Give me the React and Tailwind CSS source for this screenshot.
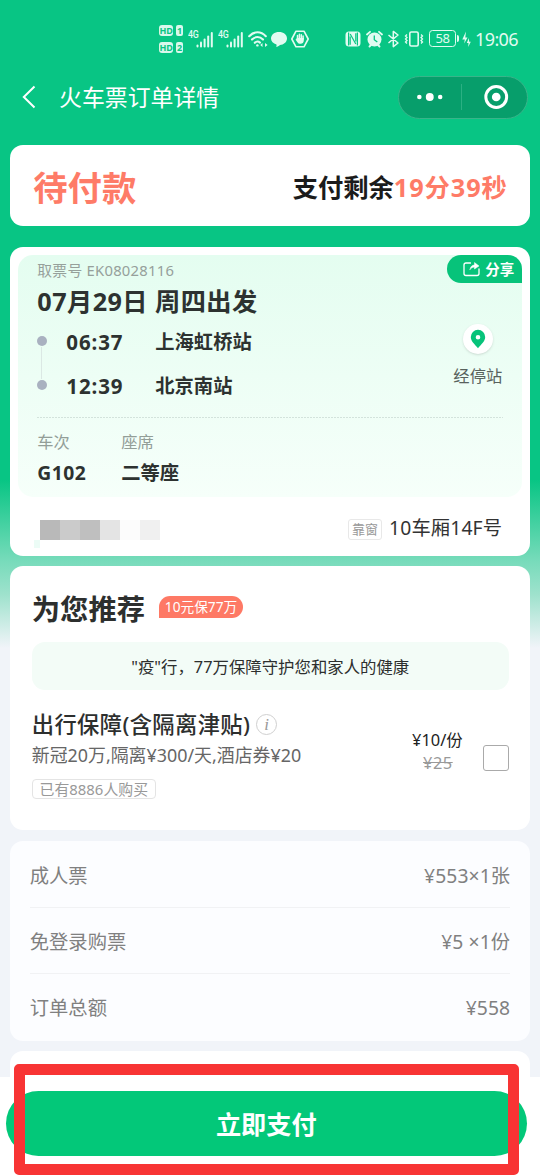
import React from "react";

function Sim({ n }) {
  return (
    <div className="flex gap-[3px]">
      <span className="flex h-[11px] w-[14px] items-center justify-center rounded-[3px] bg-[#d9f8ec] text-[9px] font-bold leading-none tracking-[-0.3px] text-[#08c584]">HD</span>
      <span className="flex h-[11px] w-[7px] items-center justify-center rounded-[2px] bg-[#d9f8ec] text-[9px] font-bold leading-none text-[#08c584]">{n}</span>
    </div>
  );
}

function Signal() {
  return (
    <div className="relative h-[18px] w-[26px]">
      <span className="absolute top-0 left-0 origin-top-left scale-x-[0.8] font-['Roboto',sans-serif] text-[11px] font-medium leading-[10px] tracking-[-0.4px]">4G</span>
      <svg className="absolute bottom-0 left-0" width="26" height="18" viewBox="0 0 26 18" fill="currentColor">
        <rect x="8.5" y="14.5" width="2" height="3" rx="1" />
        <rect x="12" y="11.5" width="2" height="6" rx="1" />
        <rect x="15.6" y="8.5" width="2" height="9" rx="1" />
        <rect x="19.2" y="5.5" width="2" height="12" rx="1" />
        <rect x="22.8" y="2" width="2" height="15.5" rx="1" />
      </svg>
    </div>
  );
}

function StatusBar() {
  return (
    <div className="flex h-[76.300px] items-center pt-[1.500px] pl-[159px] text-[#e2fbf1]">
      <div className="flex flex-col gap-[6px]">
        <Sim n="1" />
        <Sim n="2" />
      </div>
      <div className="ml-[5px] flex gap-[4px]">
        <Signal />
        <Signal />
      </div>
      <svg className="ml-[4px]" width="20" height="18" viewBox="0 0 20 18" fill="none" stroke="currentColor" strokeWidth="2.1" strokeLinecap="round">
        <path d="M1.2 6.2C6 1 13 1 17.8 6.2M4 9.6C7.3 6.2 11.7 6.2 15 9.6M6.800 12.800C8.400 11.200 10.400 11.200 12 12.600" />
        <circle cx="9.4" cy="15.4" r="1.2" fill="currentColor" stroke="none" />
        <path d="M12.2 15l2.3-2v4zM19.6 15l-2.6-2v4z" fill="currentColor" stroke="none" />
      </svg>
      <svg className="ml-[3px]" width="16" height="18" viewBox="0 0 16 18" fill="currentColor">
        <path d="M8 2c4.5 0 8 2.7 8 6.4s-3.500 6.300-7 6.500c-1.200 1-2.400 1.700-3.900 1.900.5-.7.600-1.500.4-2.300C2.300 13.600 0 11.400 0 8.500 0 4.700 3.500 2 8 2z" />
      </svg>
      <svg className="ml-[4px]" width="18" height="18" viewBox="0 0 18 18" fill="none" stroke="currentColor" strokeWidth="1.6" strokeLinejoin="round">
        <path d="M5 1.200h8L17.200 9 13 16.800H5L.8 9z" />
        <path d="M6.500 9V5.400M8.400 8.500V4.300M10.300 8.500V4.700M12.100 9V6" strokeLinecap="round" strokeWidth="1.500" />
        <path d="M5.800 8h7v2.500c0 2-1.400 3.300-3.200 3.300-1.700 0-2.600-.7-3.400-1.900L4.500 9.500l.9-.6z" fill="currentColor" stroke="none" />
      </svg>
      <svg className="ml-[36px]" width="16" height="18" viewBox="0 0 16 18">
        <rect x="0.500" y="1.500" width="15" height="15" rx="3.500" fill="currentColor" />
        <path d="M3.600 2.500v13M12.400 2.500v13M5.200 6.500v8.200M5.200 4l5.600 10M10.800 3.300v8.200" stroke="#08c584" strokeWidth="1.200" fill="none" />
      </svg>
      <svg className="ml-[5px]" width="17" height="18" viewBox="0 0 17 18">
        <circle cx="8.500" cy="9.500" r="7" fill="currentColor" />
        <path d="M1 4.500L4 1.800M16 4.500L13 1.800M3.500 16.500l1.500-1.500M13.500 16.500L12 15" stroke="currentColor" strokeWidth="1.800" strokeLinecap="round" />
        <path d="M8.300 5.500v4.200l3 2.400" stroke="#08c584" strokeWidth="1.300" fill="none" />
      </svg>
      <svg className="ml-[4px]" width="13" height="18" viewBox="0 0 13 18" fill="none" stroke="currentColor" strokeWidth="1.500" strokeLinejoin="round">
        <path d="M1.500 5l9.500 8-4.700 3.600V1.400L11 5l-9.500 8" />
      </svg>
      <svg className="ml-[4px]" width="20" height="18" viewBox="0 0 20 18" fill="none" stroke="currentColor" strokeWidth="1.600">
        <rect x="5.800" y="2" width="8.400" height="14" rx="1.500" />
        <path d="M3 4.500l-1.500 1.500L3 7.500 1.500 9 3 10.500 1.500 12 3 13.500M17 4.500L18.500 6 17 7.500 18.500 9 17 10.500 18.500 12 17 13.500" strokeWidth="1.300" />
      </svg>
      <div className="ml-[5px] flex items-center gap-[1px]">
        <span className="flex h-[17px] w-[27px] items-center justify-center rounded-[3.500px] border-[1.500px] border-current text-[13px] leading-none tracking-[-0.500px]">58</span>
        <span className="h-[7px] w-[2px] rounded-r bg-current" />
      </div>
      <svg className="ml-[3px]" width="9" height="18" viewBox="0 0 9 18" fill="currentColor">
        <path d="M4 1.500L.3 9.500h2.500L2.200 13.500 5.500 7.500H3.300zM6.800 8L4.800 13h1.700l-.3 4L8.800 11.700H7.200z" />
      </svg>
      <span className="ml-[4px] pt-px text-[18px] leading-none tracking-[-0.600px]">19:06</span>
    </div>
  );
}

function NavBar() {
  return (
    <div className="flex h-[42px] items-center pr-[12.500px] pl-[22px] text-white">
      <svg width="14" height="24" viewBox="0 0 14 24" fill="none" stroke="currentColor" strokeWidth="2">
        <path d="M12.500 1.500L1.800 12l10.700 10.500" />
      </svg>
      <h1 className="ml-[23px] flex-1 pt-[2px] text-[22.900px] leading-[42px]">火车票订单详情</h1>
      <div className="flex h-[43px] w-[130px] items-center rounded-full border border-[#39b48a] bg-[#079e6b]">
        <svg width="63" height="26" viewBox="0 0 63 26" fill="currentColor">
          <circle cx="20.500" cy="13" r="2.300" />
          <circle cx="31" cy="13" r="4" />
          <circle cx="41.500" cy="13" r="2.300" />
        </svg>
        <span className="h-[26px] w-px bg-[#2bb083]" />
        <svg width="65" height="26" viewBox="0 0 65 26">
          <circle cx="34.500" cy="13" r="10.500" fill="none" stroke="currentColor" strokeWidth="3" />
          <circle cx="34.500" cy="13" r="4.400" fill="currentColor" />
        </svg>
      </div>
    </div>
  );
}

function PaymentStatus() {
  return (
    <section className="mt-[27px] flex h-[81px] shrink-0 items-center justify-between rounded-[13px] bg-white pr-[22px] pl-[23px] font-bold">
      <span className="pt-[4px] text-[34.300px] leading-[50px] text-[#fe7b67]">待付款</span>
      <span className="pt-[2px] text-[25.300px] leading-[50px] text-[#1b1b1b]">
        支付剩余<span className="tracking-[0.900px] text-[#fe7b67]">19分39秒</span>
      </span>
    </section>
  );
}

function Stop({ time, station }) {
  return (
    <div className="flex h-[28px] items-center">
      <span className="size-[10px] rounded-full bg-[#a9b1c0]" />
      <span className="ml-[19px] w-[89px] pt-[2px] text-[20.500px] tracking-[0.900px]">{time}</span>
      <span className="pt-[2px]">{station}</span>
    </div>
  );
}

function Ticket() {
  return (
    <section className="mt-[21px] h-[308.500px] shrink-0 rounded-[13px] bg-white px-[7.500px] pt-[7.500px]">
      <div className="flex h-[242px] flex-col rounded-[15px] bg-linear-to-b from-[#e4fdf0] to-[#f6fffa] pl-[19.500px]">
        <div className="flex h-[28.500px] justify-between">
          <span className="text-[14.800px] leading-[30px] tracking-[0.250px] text-[#96a09b]">取票号 EK08028116</span>
          <button className="flex h-[28.500px] w-[75px] items-center rounded-[14px] rounded-br-none bg-[#07c37a] pl-[16px] text-white">
            <svg width="17" height="16" viewBox="0 0 17 16" fill="none" stroke="currentColor" strokeWidth="1.300" strokeLinecap="round" strokeLinejoin="round">
              <path d="M7.500 2H3a2 2 0 00-2 2v8.500a2 2 0 002 2h11a2 2 0 002-2V8" />
              <path d="M7 8.500c.5-3 2-4.300 4.500-4.500V1.500L16 5l-4.500 3V6.200C9.500 6.200 8.200 6.800 7 8.500z" fill="currentColor" strokeWidth="0.500" />
            </svg>
            <span className="ml-[5px] text-[14.500px] font-bold leading-[28px]">分享</span>
          </button>
        </div>
        <div className="h-[36px] pt-px text-[25.200px] font-bold leading-[34px] tracking-[0.450px] text-[#2d3230]">07月29日 周四出发</div>
        <div className="flex justify-between pr-[20px]">
          <div className="flex flex-col pt-[8px] text-[19.300px] font-bold leading-[28px] text-[#2d3230]">
            <Stop time="06:37" station="上海虹桥站" />
            <span className="ml-[4px] h-[16px] w-px bg-[#dbe8e4] shadow-[0_-8px_0_#dbe8e4,0_8px_0_#dbe8e4]" />
            <Stop time="12:39" station="北京南站" />
          </div>
          <div className="flex flex-col items-center pt-[5px]">
            <span className="flex size-[30px] items-center justify-center rounded-full bg-white shadow-sm">
              <svg width="16" height="20" viewBox="0 0 16 20">
                <path fillRule="evenodd" d="M8 .8a7.200 7.200 0 00-7.200 7.300c0 4.300 4 7.400 7.200 11.200 3.200-3.800 7.200-6.900 7.200-11.200A7.200 7.200 0 008 .8zm0 9.700a2.300 2.300 0 110-4.600 2.300 2.300 0 010 4.600z" fill="#07c37a" />
              </svg>
            </span>
            <span className="mt-[10px] text-[16.300px] leading-[24px] text-[#58625d]">经停站</span>
          </div>
        </div>
        <div className="mt-[18px] mr-[19px] h-px shrink-0 bg-[repeating-linear-gradient(90deg,#d3e3dc_0px,#d3e3dc_2px,transparent_2px,transparent_3px)]" />
        <div className="mt-[11px] flex text-[#2d3230]">
          <div className="w-[84px]">
            <div className="text-[16.300px] leading-[26px] text-[#939e98]">车次</div>
            <div className="mt-[3px] text-[19.300px] font-bold leading-[30px] tracking-[0.500px]">G102</div>
          </div>
          <div>
            <div className="text-[16.300px] leading-[26px] text-[#939e98]">座席</div>
            <div className="mt-[3px] text-[19.300px] font-bold leading-[30px]">二等座</div>
          </div>
        </div>
      </div>
      <div className="flex justify-between pt-[16px] pr-[20px] pl-[16px]">
        <div className="pt-[7px]">
          <div className="flex pl-[6px]">
            <span className="size-[20px] bg-[#b9b9b9]" />
            <span className="size-[20px] bg-[#cbcbcb]" />
            <span className="size-[20px] bg-[#bfbfbf]" />
            <span className="size-[20px] bg-[#e4e4e4]" />
            <span className="size-[20px] bg-[#fcfcfc]" />
            <span className="size-[20px] bg-[#f0f0f0]" />
          </div>
          <div className="h-[8px] w-[6px] bg-[#ecfcf6]" />
        </div>
        <div className="flex h-[32px] items-center gap-[7px]">
          <span className="mt-[2px] h-[21px] rounded-[3px] border border-[#e8e8e8] px-[3px] text-[13px] leading-[19px] text-[#999]">靠窗</span>
          <span className="-mt-[1px] text-[19.300px] leading-[32px] tracking-[0.150px] text-[#333]">10车厢14F号</span>
        </div>
      </div>
    </section>
  );
}

function Recommend() {
  return (
    <section className="mt-[10.500px] h-[264px] shrink-0 rounded-[13px] bg-white pr-[21px] pl-[21.500px] pt-[22px] text-[#2d2f2e]">
      <div className="flex h-[40px] items-center">
        <h2 className="pt-[2px] text-[28.300px] font-bold leading-[42px]">为您推荐</h2>
        <span className="ml-[14px] -mt-[3px] h-[22px] w-[84px] rounded-[11px] rounded-bl-none bg-[#fe7965] text-center text-[13.700px] leading-[22px] text-white">10元保77万</span>
      </div>
      <div className="mt-[13.500px] h-[48px] rounded-[13px] bg-[#f3fcf7] text-center text-[16.400px] leading-[49px]">"疫"行，77万保障守护您和家人的健康</div>
      <div className="mt-[19px] flex justify-between">
        <div>
          <div className="flex h-[32px] items-center">
            <span className="text-[22.300px] font-medium leading-[32px] tracking-[0.350px]">出行保障(含隔离津贴)</span>
            <span className="ml-[6px] flex size-[21px] items-center justify-center rounded-full border border-[#d0d0d0] font-['Liberation_Serif',serif] text-[17px] italic leading-none text-[#999]">i</span>
          </div>
          <div className="text-[17.900px] leading-[29px] text-[#666]">新冠20万,隔离¥300/天,酒店券¥20</div>
          <div className="mt-[9px] flex h-[20px] w-[124px] items-center justify-center rounded-[4px] border border-[#e4e4e4] text-[14.900px] leading-[18px] text-[#999]">已有8886人购买</div>
        </div>
        <div className="flex gap-[20px] pt-[19px]">
          <div className="text-right text-[16.400px]">
            <div className="leading-[24px] text-[#222]">¥10/份</div>
            <div className="pr-[10px] leading-[22px] tracking-[0.500px] text-[#999] line-through">¥25</div>
          </div>
          <span className="mt-[17px] size-[26px] rounded-[3px] border-[1.500px] border-[#aaa]" />
        </div>
      </div>
    </section>
  );
}

function PriceRow({ label, value }) {
  return (
    <div className="flex h-[66px] items-center justify-between border-b border-[#f1f2f4] pt-[4px] last:border-b-0">
      <span>{label}</span>
      <span className="tracking-[0.100px]">{value}</span>
    </div>
  );
}

export default function App() {
  return (
    <div className="relative flex h-[1175px] w-[540px] flex-col overflow-hidden bg-[#f1f4f9] bg-[linear-gradient(#08c584_0px,#08c584_480px,#76dbba_560px,#9fe2cd_595px,#f1f4f9_648px)] font-['Noto_Sans','Noto_Sans_CJK_SC',sans-serif]">
      <StatusBar />
      <NavBar />
      <main className="flex min-h-0 flex-1 flex-col overflow-hidden px-[10.300px]">
        <PaymentStatus />
        <Ticket />
        <Recommend />
        <section className="mt-[10.500px] h-[200px] shrink-0 rounded-[13px] bg-[#fcfdff] px-[19.500px] pt-px text-[19.300px] text-[#808080]">
          <PriceRow label="成人票" value="¥553×1张" />
          <PriceRow label="免登录购票" value="¥5 ×1份" />
          <PriceRow label="订单总额" value="¥558" />
        </section>
        <section className="mt-[10.500px] h-[60px] shrink-0 rounded-t-[13px] bg-white" />
      </main>
      <footer className="h-[98px] shrink-0 bg-white pt-[14px] pr-[13.500px] pl-[6px]">
        <button className="block h-[65px] w-full rounded-full bg-[#03c879] text-[25.200px] font-bold leading-[67px] text-white">立即支付</button>
      </footer>
      <div className="absolute top-[1063.500px] left-[13.500px] h-[111.500px] w-[505px] rounded-[5px] border-[11px] border-[#f83434]" />
    </div>
  );
}
